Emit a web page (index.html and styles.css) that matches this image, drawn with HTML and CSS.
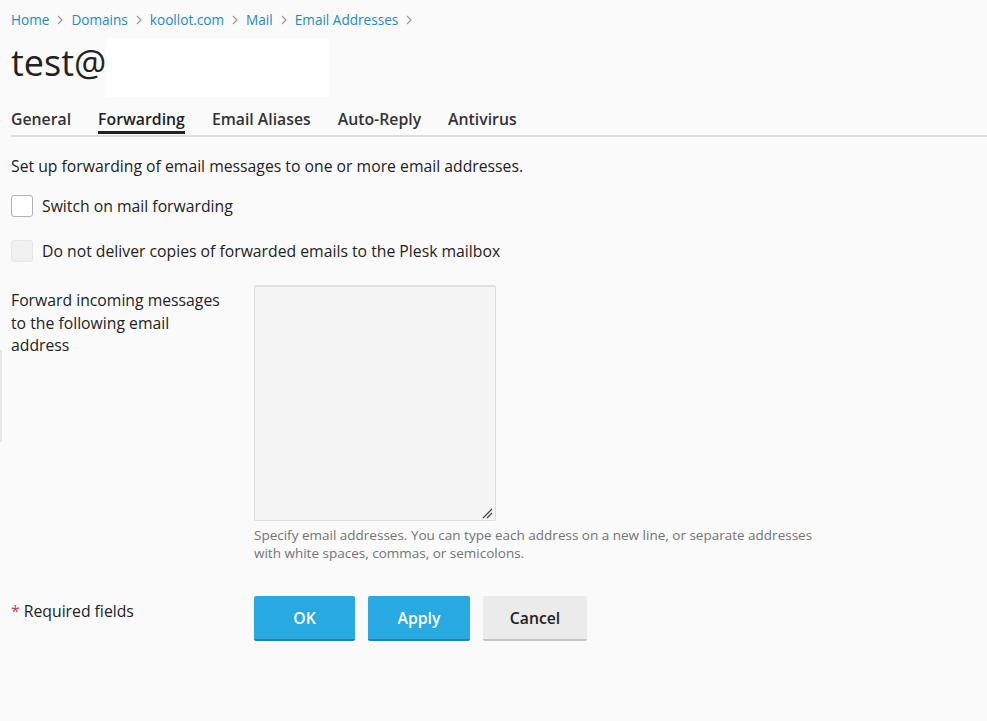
FILE: index.html
```
<!DOCTYPE html>
<html>
<head>
<meta charset="utf-8">
<link rel="stylesheet" href="styles.css">
</head>
<body>
<div class="page">
  <nav class="crumbs">
    <a>Home</a><span class="sep"><svg width="6" height="10" viewBox="0 0 6 10"><path d="M1 1l4 4-4 4" fill="none" stroke="#9a9a9a" stroke-width="1.2"/></svg></span>
    <a>Domains</a><span class="sep"><svg width="6" height="10" viewBox="0 0 6 10"><path d="M1 1l4 4-4 4" fill="none" stroke="#9a9a9a" stroke-width="1.2"/></svg></span>
    <a>koollot.com</a><span class="sep"><svg width="6" height="10" viewBox="0 0 6 10"><path d="M1 1l4 4-4 4" fill="none" stroke="#9a9a9a" stroke-width="1.2"/></svg></span>
    <a>Mail</a><span class="sep"><svg width="6" height="10" viewBox="0 0 6 10"><path d="M1 1l4 4-4 4" fill="none" stroke="#9a9a9a" stroke-width="1.2"/></svg></span>
    <a>Email Addresses</a><span class="sep"><svg width="6" height="10" viewBox="0 0 6 10"><path d="M1 1l4 4-4 4" fill="none" stroke="#9a9a9a" stroke-width="1.2"/></svg></span>
  </nav>
  <div class="title-row">
    <h1 class="title">test@</h1><div class="redact"></div>
  </div>
  <div class="tabs">
    <span class="tab">General</span>
    <span class="tab active">Forwarding</span>
    <span class="tab">Email Aliases</span>
    <span class="tab">Auto-Reply</span>
    <span class="tab">Antivirus</span>
  </div>
  <p class="intro">Set up forwarding of email messages to one or more email addresses.</p>
  <label class="check"><span class="box"></span>Switch on mail forwarding</label>
  <label class="check"><span class="box disabled"></span>Do not deliver copies of forwarded emails to the Plesk mailbox</label>
  <div class="form-row">
    <div class="field-label"><span class="label-text">Forward incoming messages to the following email address</span></div>
    <div class="field">
      <div class="textarea"><svg class="grip" width="12" height="12" viewBox="0 0 12 12"><path d="M11 2L2 11M11 6L6 11" stroke="#444" stroke-width="1.2"/></svg></div>
      <div class="hint">Specify email addresses. You can type each address on a new line, or separate addresses with white spaces, commas, or semicolons.</div>
    </div>
  </div>
  <div class="form-row actions">
    <div class="field-label req"><span class="star">*</span> Required fields</div>
    <div class="buttons">
      <button class="btn primary">OK</button>
      <button class="btn primary">Apply</button>
      <button class="btn">Cancel</button>
    </div>
  </div>
</div>
<div class="edge"></div>
</body>
</html>
```
FILE: styles.css
```
html, body {
  margin: 0;
  padding: 0;
  background: #fafafa;
  font-family: "Open Sans", "Noto Sans", sans-serif;
  color: #222;
}
.page {
  padding: 9px 0 0 11px;
}
.crumbs {
  display: flex;
  align-items: center;
  font-size: 13.6px;
  line-height: 20px;
  margin-top: 1px;
}
.crumbs a {
  color: #1a8bc4;
}
.crumbs .sep {
  display: inline-flex;
  width: 6px;
  margin: 0 8px;
}
.title-row {
  display: flex;
  align-items: flex-start;
  margin-top: 8px;
  height: 59px;
}
.title {
  margin: 0;
  font-weight: 400;
  font-size: 36px;
  line-height: 48px;
  margin-top: 1px;
  color: #222;
}
.redact {
  width: 223px;
  height: 59px;
  background: #fff;
}
.tabs {
  display: flex;
  gap: 27px;
  border-bottom: 2px solid #dedede;
  margin-top: 9px;
  height: 29px;
}
.tab {
  font-size: 15.8px;
  font-weight: 600;
  color: #333;
  line-height: 26px;
  height: 28px;
  box-sizing: border-box;
  margin-bottom: -1px;
}
.tab.active {
  color: #222;
  border-bottom: 3px solid #222;
}
.intro {
  margin: 18px 0 0;
  font-size: 15.75px;
  line-height: 22px;
}
.check {
  display: flex;
  align-items: center;
  font-size: 15.75px;
  line-height: 22px;
  margin-top: 18px;
}
.check + .check {
  margin-top: 23px;
}
.box {
  width: 22px;
  height: 22px;
  box-sizing: border-box;
  border: 1px solid #b3b3b3;
  border-radius: 3px;
  background: #fff;
  margin-right: 9px;
}
.box.disabled {
  background: #f0f0f0;
  border-color: #e6e6e6;
}
.form-row {
  display: flex;
  margin-top: 23px;
}
.field-label {
  width: 243px;
  font-size: 15.75px;
  line-height: 22.5px;
  padding-top: 4px;
  padding-right: 20px;
  box-sizing: border-box;
}
.label-text {
  display: block;
  max-width: 216px;
}
.field {
  width: 580px;
}
.textarea {
  width: 242px;
  height: 236px;
  box-sizing: border-box;
  background: #f4f4f4;
  border: 1px solid #dcdcdc;
  border-top: 2px solid #e0e0e0;
  border-radius: 2px;
  position: relative;
}
.grip {
  position: absolute;
  right: 2px;
  bottom: 1px;
}
.hint {
  font-size: 13.5px;
  line-height: 18px;
  color: #737373;
  margin-top: 5px;
}
.actions {
  margin-top: 34px;
}
.req {
  padding-top: 4px;
}
.star {
  color: #d6334c;
}
.buttons {
  display: flex;
  gap: 13px;
}
.btn {
  font-family: "Open Sans", "Noto Sans", sans-serif;
  font-size: 15.75px;
  font-weight: 600;
  height: 45px;
  border: 0;
  border-bottom: 2px solid #c4c4c4;
  border-radius: 2px;
  background: #ebebeb;
  color: #222;
  width: 104px;
  padding: 0;
}
.btn.primary {
  background: #28a9e0;
  border-bottom-color: #1c85b3;
  color: #fff;
  width: 101px;
}
.btn.primary + .btn.primary {
  width: 102px;
}
.edge {
  position: absolute;
  left: 0;
  top: 350px;
  width: 2px;
  height: 92px;
  background: #e8e8e8;
}
```
